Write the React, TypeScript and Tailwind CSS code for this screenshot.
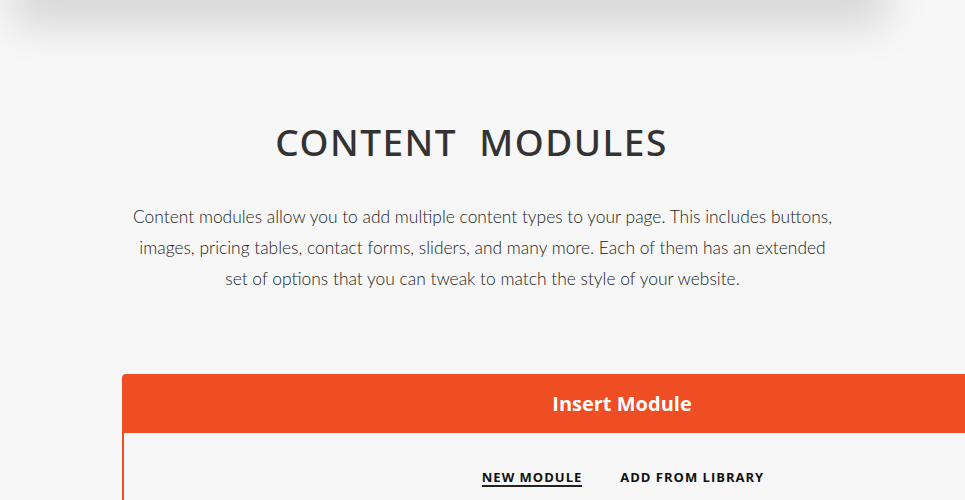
export default function App() {
  return (
    <div className="min-h-[500px] w-full overflow-hidden bg-[#f7f7f7]">
      <div className="mx-[30px] h-[20px] -mt-[20px] w-[840px] bg-[#f7f7f7] shadow-[0_8px_40px_18px_rgba(0,0,0,0.13)]" />
      <div className="flex w-[965px] flex-col items-center">
        <h1 className="mt-[102px] ml-[-22px] whitespace-pre font-['Noto_Sans',sans-serif] text-[37px] font-medium leading-[80px] tracking-[1.5px] text-[#333]">
          {'CONTENT  MODULES'}
        </h1>
        <p className="mt-[19px] w-[705px] text-center font-['Lato',sans-serif] text-[17.4px] font-light leading-[31px] text-[#222]">
          Content modules allow you to add multiple content types to your page. This includes buttons,
          images, pricing tables, contact forms, sliders, and many more. Each of them has an extended
          set of options that you can tweak to match the style of your website.
        </p>
      </div>
      <div className="ml-[122px] mt-[80px] w-[1000px]">
        <div className="flex h-[59px] items-center justify-center rounded-t-[4px] bg-[#ef4d23] font-['Open_Sans',sans-serif] text-[20px] font-bold text-white">
          Insert Module
        </div>
        <div className="flex h-[80px] justify-center gap-[38px] border-l-2 border-[#ef4d23] pt-[35px] font-['Open_Sans',sans-serif] text-[13px] font-bold tracking-[1px] text-[#111]">
          <span className="h-[19px] border-b-2 border-[#222]">NEW MODULE</span>
          <span>ADD FROM LIBRARY</span>
        </div>
      </div>
    </div>
  )
}
